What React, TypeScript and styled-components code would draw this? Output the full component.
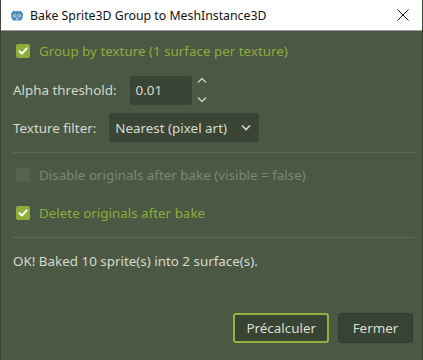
import React from 'react';
import styled, { createGlobalStyle } from 'styled-components';

const GlobalStyle = createGlobalStyle`
  html, body {
    margin: 0;
    padding: 0;
    background: #4b5843;
  }
  * {
    box-sizing: border-box;
  }
`;

const Window = styled.div`
  width: 423px;
  height: 360px;
  display: flex;
  flex-direction: column;
  background: #4b5843;
  border-left: 1px solid #3c4636;
  border-right: 1px solid #3c4636;
  font-family: 'Noto Sans', 'Open Sans', sans-serif;
  overflow: hidden;
`;

const TitleBar = styled.div`
  height: 31px;
  flex-shrink: 0;
  display: flex;
  align-items: center;
  background: #ffffff;
  border-bottom: 1px solid #9a9a9a;
  padding: 0 8px 0 9px;
`;

const Title = styled.span`
  margin-left: 6px;
  font-family: 'Noto Sans', sans-serif;
  font-size: 12.3px;
  color: #111;
  flex: 1;
`;

const CloseButton = styled.div`
  width: 14px;
  height: 14px;
  margin-right: 4px;
  display: flex;
  align-items: center;
  justify-content: center;
`;

const Body = styled.div`
  flex: 1;
  display: flex;
  flex-direction: column;
  padding: 0 7px 0 12px;
`;

const Row = styled.div<{ $top: number; $height: number }>`
  display: flex;
  align-items: center;
  margin-top: ${(p) => p.$top}px;
  height: ${(p) => p.$height}px;
  flex-shrink: 0;
`;

const CheckRow = styled(Row)`
  padding-left: 3px;
  gap: 9px;
`;

const Box = styled.div<{ $checked?: boolean; $disabled?: boolean }>`
  width: 14px;
  height: 14px;
  border-radius: 2px;
  background: ${(p) => (p.$disabled ? '#55624e' : p.$checked ? '#8caf3c' : '#3b4535')};
  display: flex;
  align-items: center;
  justify-content: center;
`;

const CheckText = styled.span<{ $checked?: boolean; $disabled?: boolean }>`
  font-size: 13.4px;
  color: ${(p) => (p.$disabled ? '#7d8876' : p.$checked ? '#8dab3d' : '#d2d6cc')};
`;

const Label = styled.span`
  font-size: 13.4px;
  color: #d4d8cf;
`;

const Field = styled.div`
  background: #3a4535;
  border-radius: 3px;
  height: 29px;
  display: flex;
  align-items: center;
  padding: 0 6px;
  font-size: 13.4px;
  color: #d8dcd2;
`;

const SpinInput = styled(Field)`
  width: 62px;
  margin-left: 13px;
`;

const Arrows = styled.div`
  display: flex;
  flex-direction: column;
  justify-content: space-between;
  height: 26px;
  margin-left: 5px;
`;

const Select = styled(Field)`
  width: 150px;
  margin-left: 13px;
  justify-content: space-between;
  padding-right: 8px;
`;

const Separator = styled.div<{ $top: number }>`
  height: 1px;
  margin-top: ${(p) => p.$top}px;
  background: #5e6b57;
  flex-shrink: 0;
`;

const Status = styled.div`
  margin-top: 11px;
  height: 24px;
  display: flex;
  align-items: center;
  font-size: 13.4px;
  color: #d6dad0;
`;

const Footer = styled.div`
  margin-top: auto;
  margin-bottom: 17px;
  margin-right: 2px;
  display: flex;
  justify-content: flex-end;
  gap: 9px;
`;

const Button = styled.div<{ $focused?: boolean }>`
  height: 30px;
  padding: 0 ${(p) => (p.$focused ? 11 : 13)}px;
  min-width: 75px;
  display: flex;
  align-items: center;
  justify-content: center;
  background: #394333;
  border: ${(p) => (p.$focused ? '2px solid #8fb33e' : '1px solid #343e2f')};
  border-radius: 3px;
  font-size: 13.4px;
  color: #dadfd4;
`;

const Check = () => (
  <svg width="10" height="10" viewBox="0 0 10 10">
    <path d="M1.5 5.2 L4 7.6 L8.6 2.4" stroke="#fff" strokeWidth="2" fill="none" strokeLinecap="round" strokeLinejoin="round" />
  </svg>
);

const Chevron = ({ up }: { up?: boolean }) => (
  <svg width="10" height="7" viewBox="0 0 10 7">
    <path d={up ? 'M1 5.5 L5 1.5 L9 5.5' : 'M1 1.5 L5 5.5 L9 1.5'} stroke="#c9cec3" strokeWidth="1.4" fill="none" />
  </svg>
);

const GodotIcon = () => (
  <svg width="14" height="13" viewBox="0 0 14 13">
    <path d="M2 3 L4 1.5 L5 2.5 L7 1.8 L9 2.5 L10 1.5 L12 3 L13 5 L12.5 9 L11 11.5 L3 11.5 L1.5 9 L1 5 Z" fill="#478cbf" />
    <circle cx="4.8" cy="6.8" r="1.6" fill="#fff" />
    <circle cx="9.2" cy="6.8" r="1.6" fill="#fff" />
    <circle cx="4.9" cy="6.9" r="0.8" fill="#414042" />
    <circle cx="9.1" cy="6.9" r="0.8" fill="#414042" />
    <rect x="6.4" y="8.6" width="1.2" height="2" fill="#fff" />
  </svg>
);

export default function App() {
  return (
    <>
      <GlobalStyle />
      <Window>
        <TitleBar>
          <GodotIcon />
          <Title>Bake Sprite3D Group to MeshInstance3D</Title>
          <CloseButton>
            <svg width="12" height="12" viewBox="0 0 12 12">
              <path d="M0.5 0.5 L11.5 11.5 M11.5 0.5 L0.5 11.5" stroke="#111" strokeWidth="1" />
            </svg>
          </CloseButton>
        </TitleBar>
        <Body>
          <CheckRow $top={6} $height={28}>
            <Box $checked>
              <Check />
            </Box>
            <CheckText $checked>Group by texture (1 surface per texture)</CheckText>
          </CheckRow>
          <Row $top={10} $height={30}>
            <Label>Alpha threshold:</Label>
            <SpinInput>0.01</SpinInput>
            <Arrows>
              <Chevron up />
              <Chevron />
            </Arrows>
          </Row>
          <Row $top={7} $height={31}>
            <Label>Texture filter:</Label>
            <Select>
              <span>Nearest (pixel art)</span>
              <svg width="10" height="7" viewBox="0 0 10 7">
                <path d="M1 1.5 L5 5.5 L9 1.5" stroke="#d8dcd2" strokeWidth="1.6" fill="none" />
              </svg>
            </Select>
          </Row>
          <Separator $top={9} />
          <CheckRow $top={8} $height={28}>
            <Box $disabled />
            <CheckText $disabled>Disable originals after bake (visible = false)</CheckText>
          </CheckRow>
          <CheckRow $top={10} $height={28}>
            <Box $checked>
              <Check />
            </Box>
            <CheckText $checked>Delete originals after bake</CheckText>
          </CheckRow>
          <Separator $top={10} />
          <Status>OK! Baked 10 sprite(s) into 2 surface(s).</Status>
          <Footer>
            <Button $focused>Précalculer</Button>
            <Button>Fermer</Button>
          </Footer>
        </Body>
      </Window>
    </>
  );
}
